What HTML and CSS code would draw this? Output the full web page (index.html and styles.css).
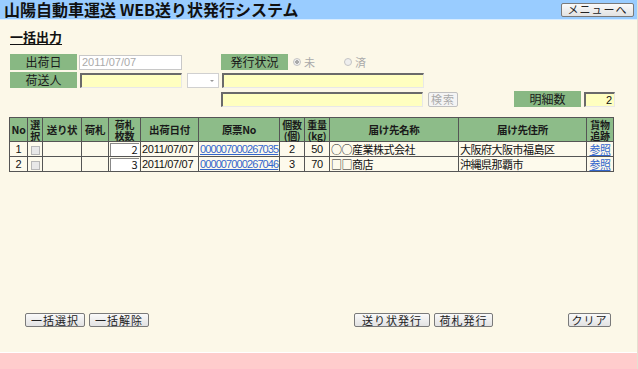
FILE: index.html
```html
<!DOCTYPE html>
<html lang="ja">
<head>
    <meta charset="UTF-8">
    <title>一括出力</title>
    <link rel="stylesheet" href="styles.css">
</head>
<body>
    <div class="page">
        <div class="topbar">
            <h1 class="system-title">山陽自動車運送 WEB送り状発行システム</h1>
            <button class="btn menu-btn">メニューへ</button>
        </div>

        <div class="content">
            <h2 class="page-title">一括出力</h2>

            <div class="form">
                <div class="form-row">
                    <span class="label">出荷日</span>
                    <input class="field field-date" type="text" value="2011/07/07" disabled>
                    <span class="label label-status">発行状況</span>
                    <label class="radio"><span class="radio-dot on"></span>未</label>
                    <label class="radio"><span class="radio-dot"></span>済</label>
                </div>
                <div class="form-row">
                    <span class="label">荷送人</span>
                    <input class="field field-shipper" type="text">
                    <span class="select"><span class="select-arrow"></span></span>
                    <input class="field field-wide" type="text">
                </div>
                <div class="form-row">
                    <input class="field field-wide field-row3" type="text">
                    <button class="btn btn-search" disabled>検索</button>
                    <span class="label label-count">明細数</span>
                    <input class="field field-count" type="text" value="2">
                </div>
            </div>

            <table class="list">
                <thead>
                    <tr>
                        <th class="c-no">No</th>
                        <th class="c-sel"><span class="hl">選</span><span class="hl">択</span></th>
                        <th class="c-inv">送り状</th>
                        <th class="c-tag">荷札</th>
                        <th class="c-tags"><span class="hl">荷札</span><span class="hl">枚数</span></th>
                        <th class="c-date">出荷日付</th>
                        <th class="c-slip">原票No</th>
                        <th class="c-qty"><span class="hl">個数</span><span class="hl">(個)</span></th>
                        <th class="c-wt"><span class="hl">重量</span><span class="hl">(kg)</span></th>
                        <th class="c-name">届け先名称</th>
                        <th class="c-addr">届け先住所</th>
                        <th class="c-track"><span class="hl">貨物</span><span class="hl">追跡</span></th>
                    </tr>
                </thead>
                <tbody>
                    <tr>
                        <td class="center digits">1</td>
                        <td class="center"><span class="check"></span></td>
                        <td></td>
                        <td></td>
                        <td class="tags"><span class="tag-input">2</span></td>
                        <td class="digits">2011/07/07</td>
                        <td class="digits"><a class="slip" href="#">000007000267035</a></td>
                        <td class="center digits">2</td>
                        <td class="center digits">50</td>
                        <td>○○産業株式会社</td>
                        <td>大阪府大阪市福島区</td>
                        <td class="center"><a href="#">参照</a></td>
                    </tr>
                    <tr>
                        <td class="center digits">2</td>
                        <td class="center"><span class="check"></span></td>
                        <td></td>
                        <td></td>
                        <td class="tags"><span class="tag-input">3</span></td>
                        <td class="digits">2011/07/07</td>
                        <td class="digits"><a class="slip" href="#">000007000267046</a></td>
                        <td class="center digits">3</td>
                        <td class="center digits">70</td>
                        <td>□□商店</td>
                        <td>沖縄県那覇市</td>
                        <td class="center"><a href="#">参照</a></td>
                    </tr>
                </tbody>
            </table>

            <div class="actions">
                <button class="btn btn-all">一括選択</button>
                <button class="btn btn-none">一括解除</button>
                <button class="btn btn-invoice">送り状発行</button>
                <button class="btn btn-tag">荷札発行</button>
                <button class="btn btn-clear">クリア</button>
            </div>
        </div>

        <div class="footer"></div>
    </div>
</body>
</html>
```

FILE: styles.css
```css
body {
    margin: 0;
    background: #fcf8e8;
    font-family: "Noto Sans CJK JP", "DejaVu Sans", sans-serif;
    font-size: 12px;
    color: #111;
}
.page {
    width: 638px;
    height: 369px;
    display: flex;
    flex-direction: column;
    background: #fcf8e8;
    box-sizing: border-box;
    border-right: 1px solid #e4e0d0;
}
.topbar {
    height: 19px;
    background: #99ccff;
    display: flex;
    align-items: center;
    justify-content: space-between;
    padding: 0 3px 0 4px;
    border-bottom: 1px solid #d8ecff;
}
.system-title {
    margin: 0;
    font-size: 16px;
    font-weight: bold;
    line-height: 19px;
    color: #111;
    white-space: nowrap;
}
.btn {
    font-family: "Noto Sans CJK JP", "DejaVu Sans", sans-serif;
    font-size: 11px;
    line-height: 11px;
    height: 15px;
    padding: 0;
    color: #222;
    background: linear-gradient(#fafafa, #e2e2e2);
    border: 1px solid #7a7a7a;
    border-radius: 2px;
    letter-spacing: 1px;
}
.menu-btn {
    width: 73px;
    height: 14px;
}
.content {
    flex: 1;
    padding: 9px 0 0 10px;
}
.page-title {
    margin: 0 0 10px;
    font-size: 13px;
    font-weight: bold;
    line-height: 15px;
    text-decoration: underline;
    text-underline-offset: 2px;
}
.form-row {
    display: flex;
    align-items: center;
    height: 16px;
    margin-bottom: 2px;
}
.form-row:nth-child(3) {
    margin-top: 3px;
}
.label {
    width: 67px;
    height: 16px;
    line-height: 16px;
    background: #88b883;
    color: #1a1a1a;
    text-align: center;
    flex-shrink: 0;
}
.label-status {
    margin-left: 39px;
}
.label-count {
    margin-left: 56px;
}
.field {
    box-sizing: border-box;
    height: 15px;
    background: #ffffc0;
    border: 1px solid;
    border-color: #6a6a6a #e8e8e8 #e8e8e8 #6a6a6a;
    border-width: 2px 1px 1px 2px;
    padding: 0 2px;
    font-family: "Liberation Sans", "Noto Sans CJK JP", sans-serif;
    font-size: 11px;
    color: #111;
}
.field-date {
    width: 103px;
    margin-left: 2px;
    background: #fff;
    border: 1px solid #c8c8c8;
    color: #aaa;
}
.field-shipper {
    width: 102px;
    margin-left: 3px;
}
.select {
    position: relative;
    box-sizing: border-box;
    width: 32px;
    height: 15px;
    margin-left: 5px;
    background: #fff;
    border: 1px solid #d0d0d0;
}
.select-arrow {
    position: absolute;
    right: 4px;
    top: 6px;
    border-left: 2px solid transparent;
    border-right: 2px solid transparent;
    border-top: 2px solid #999;
}
.field-wide {
    width: 202px;
    margin-left: 3px;
}
.field-row3 {
    margin-left: 211px;
}
.field-count {
    width: 31px;
    margin-left: 3px;
    text-align: right;
}
.radio {
    display: flex;
    align-items: center;
    gap: 3px;
    color: #aaa;
    font-size: 11px;
    margin-left: 5px;
    width: 46px;
}
.radio-dot {
    width: 6px;
    height: 6px;
    border-radius: 50%;
    border: 1px solid #c4c4c4;
    background: #eee;
}
.radio-dot.on {
    background: radial-gradient(#aaa 40%, #eee 45%);
}
.btn-search {
    width: 30px;
    height: 15px;
    margin-left: 5px;
    color: #aaa;
    background: #f4f4f4;
    border-color: #c0c0c0;
}
.list {
    margin-top: 10px;
    width: 605px;
    margin-left: -1px;
    border-collapse: collapse;
    border: 1px solid #555;
    table-layout: fixed;
}
.list th,
.list td {
    box-sizing: border-box;
    border: 1px solid #555;
}
.list th {
    background: #8dbc89;
    font-size: 10.5px;
    font-weight: bold;
    line-height: 12px;
    height: 24px;
    padding: 0;
    color: #1a1a1a;
    white-space: nowrap;
    letter-spacing: -0.3px;
}
.hl {
    display: block;
    height: 11px;
    line-height: 11px;
    font-size: 10px;
}
.list td {
    height: 15px;
    padding: 0 1px;
    font-size: 11px;
    line-height: 13px;
    letter-spacing: -0.5px;
    white-space: nowrap;
    overflow: hidden;
    background: #fdfaec;
}
.list td.digits {
    font-family: "Liberation Sans", "Noto Sans CJK JP", sans-serif;
    letter-spacing: -0.3px;
}
.list a {
    color: #3366cc;
}
.list a.slip {
    letter-spacing: -0.9px;
}
.c-no { width: 18px; }
.c-sel { width: 15px; }
.c-inv { width: 39px; }
.c-tag { width: 27px; }
.c-tags { width: 32px; }
.c-date { width: 58px; }
.c-slip { width: 81px; }
.c-qty { width: 25px; }
.c-wt { width: 25px; }
.c-name { width: 129px; }
.c-addr { width: 128px; }
.c-track { width: 27px; }
.center {
    text-align: center;
}
.check {
    display: inline-block;
    width: 7px;
    height: 7px;
    border: 1px solid #b8b8b8;
    background: #e8e8e8;
    vertical-align: middle;
}
.list td.tags {
    padding: 0 1px;
}
.tag-input {
    display: block;
    box-sizing: border-box;
    height: 13px;
    line-height: 11px;
    text-align: right;
    padding-right: 2px;
    background: #fff;
    border-top: 1px solid #888;
    border-left: 1px solid #888;
}
.actions {
    display: flex;
    margin-top: 141px;
    padding-left: 15px;
}
.actions .btn {
    height: 14px;
    margin-right: 4px;
}
.btn-all { width: 60px; }
.btn-none { width: 60px; }
.btn-invoice { width: 76px; margin-left: 201px; }
.btn-tag { width: 59px; }
.btn-clear { width: 43px; margin-left: 71px; }
.footer {
    height: 16px;
    background: #ffcccc;
    border-top: 1px solid #fff;
}
```
